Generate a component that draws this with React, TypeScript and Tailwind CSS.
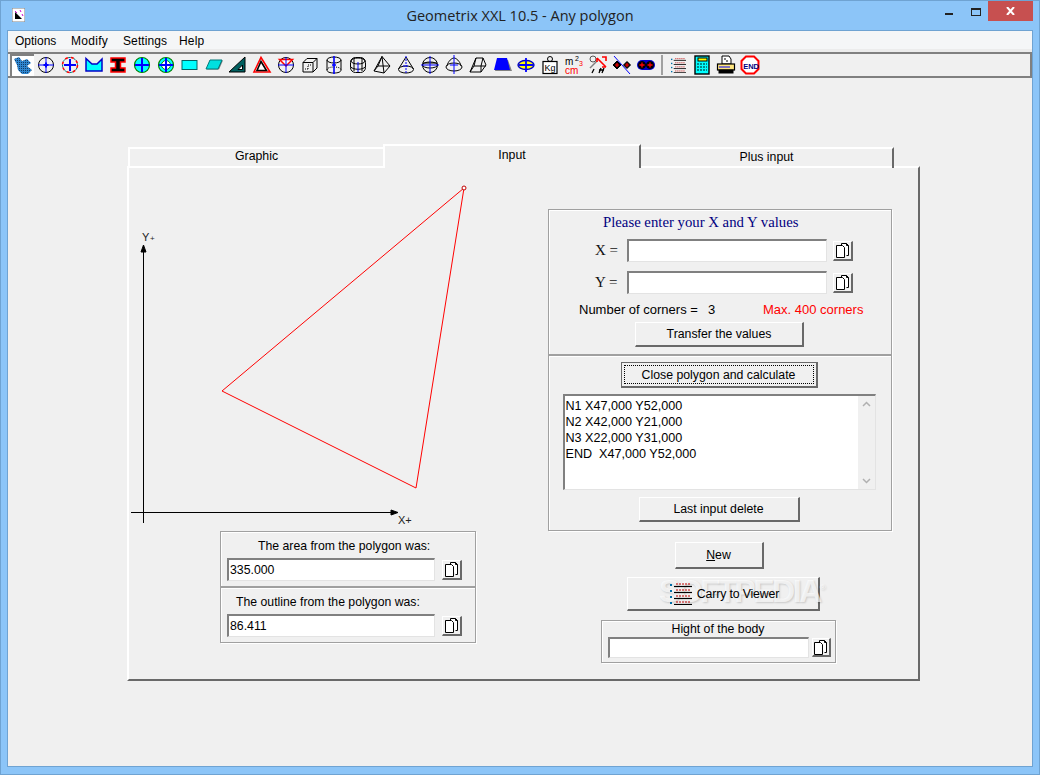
import React from 'react';

const arial = 'font-["Liberation_Sans",Arial,sans-serif]';
const serif = 'font-["Liberation_Serif","Times_New_Roman",serif]';

// win9x style bevels
const raised = 'border border-t-white border-l-white border-r-2 border-b-2 border-r-[#696969] border-b-[#696969] bg-[#f0f0f0] text-[12.3px] text-black';
const sunken = 'border border-t-2 border-l-2 border-t-[#808080] border-l-[#808080] border-r-[#e3e3e3] border-b-[#e3e3e3] bg-white';
const etched = 'border border-[#a0a0a0] shadow-[1px_1px_0_#fff,inset_1px_1px_0_#fff]';

const menus = [
  { label: 'Options', cls: 'w-[56px]' },
  { label: 'Modify', cls: 'w-[52px] tracking-[0.3px]' },
  { label: 'Settings', cls: 'w-[56px] tracking-[0.1px]' },
  { label: 'Help', cls: 'w-[30px] tracking-[0.2px]' },
];

const Cross = ({ r = 7, w = 1, c = '#0000ff' }: { r?: number; w?: number; c?: string }) => (
  <path d={`M10 ${10 - r}V${10 + r}M${10 - r} 10H${10 + r}`} stroke={c} strokeWidth={w} fill="none" />
);

const Ic = ({ children }: { children: React.ReactNode }) => (
  <svg width="20" height="20" viewBox="0 0 20 20" fill="none" stroke="#000" strokeWidth="1">
    {children}
  </svg>
);

const toolbarIcons: React.ReactNode[] = [
  <Ic>
    <defs>
      <pattern id="dith" width="2" height="2" patternUnits="userSpaceOnUse" stroke="none">
        <rect width="2" height="2" fill="#2f86d0" />
        <rect width="1" height="1" fill="#123c66" />
      </pattern>
    </defs>
    <path d="M1 3L6 1L9 5L14 3L18 7L14 10L19 14L15 18L9 18L5 14L4 9Z" fill="url(#dith)" stroke="none" />
  </Ic>,
  <Ic>
    <circle cx="10" cy="10" r="7.5" />
    <Cross r={8} />
    <path d="M10 7.5V12.5M7.5 10H12.5" stroke="#0000ff" strokeWidth="2" />
  </Ic>,
  <Ic>
    <circle cx="10" cy="10" r="7.5" stroke="#ff0000" strokeWidth="1.5" strokeDasharray="3 3" />
    <circle cx="10" cy="10" r="7.5" stroke="#007878" strokeWidth="1" strokeDasharray="3 3" strokeDashoffset="3" />
    <Cross r={6} w={2} />
  </Ic>,
  <Ic>
    <path d="M2 3.5L8 9L13 9L18 4V16H2Z" fill="#00ffff" stroke="#0000c8" strokeWidth="1.5" />
  </Ic>,
  <Ic>
    <path d="M3 3H17V7H12.5V13H17V17H3V13H7.5V7H3Z" fill="#000" stroke="#ff0000" strokeWidth="1.5" />
  </Ic>,
  <Ic>
    <circle cx="10" cy="10" r="7.5" fill="#00ffff" stroke="#008000" strokeWidth="1.2" />
    <Cross r={7} w={2} />
  </Ic>,
  <Ic>
    <circle cx="10" cy="10" r="7.5" fill="#00ffff" stroke="#008000" strokeWidth="1.2" />
    <circle cx="10" cy="10" r="4.5" fill="#fff" stroke="#008000" />
    <Cross r={7} w={2} />
  </Ic>,
  <Ic>
    <rect x="2" y="5.5" width="15" height="9" fill="#00ffff" stroke="#006464" strokeWidth="1" />
  </Ic>,
  <Ic>
    <path d="M7 5.5H19L15 14.5H3Z" fill="#808080" stroke="none" />
    <path d="M6 5H18L14 14H2Z" fill="#00e0e0" stroke="#007878" />
  </Ic>,
  <Ic>
    <path d="M1 17L17 2V17Z" fill="#005f5f" stroke="#000" />
    <path d="M10 14.5L14.5 10V14.5Z" fill="#fff" stroke="#000" />
  </Ic>,
  <Ic>
    <path d="M9 2.5L18 17H2Z" fill="#fff" stroke="#ff0000" strokeWidth="1.6" />
    <path d="M9 6.5L14.5 15.5H5Z" fill="#fff" stroke="#000" strokeWidth="1.6" />
  </Ic>,
  <Ic>
    <circle cx="10" cy="10" r="7.5" />
    <path d="M3.5 4.5H16.5L10 11Z" fill="#fff" stroke="#ff0000" strokeWidth="1.5" />
    <Cross r={8} />
  </Ic>,
  <Ic>
    <path d="M3 7.5L7 3.5H17V13L13 17H3ZM3 7.5H13V17M13 7.5L17 3.5" />
    <path d="M5 14H8M11 10H8V14" strokeDasharray="1 1" />
  </Ic>,
  <Ic>
    <ellipse cx="10" cy="5" rx="7" ry="3" />
    <path d="M3 5V15C3 17 6 18 10 18S17 17 17 15V5" />
    <path d="M3 15C3 13 6 12 10 12S17 13 17 15" strokeDasharray="1 1" />
    <path d="M10 1V19M8 10H12" stroke="#0000ff" strokeWidth="1.6" />
  </Ic>,
  <Ic>
    <rect x="2.5" y="2.5" width="15" height="15" rx="5" />
    <ellipse cx="10" cy="6" rx="7" ry="3" />
    <path d="M6 4V16M14 4V16M3 12C5 15 15 15 17 12" />
    <path d="M10 7V17" stroke="#0000ff" />
  </Ic>,
  <Ic>
    <path d="M10 1.5L2 16L12 18L18 11ZM10 1.5L12 18M10 1.5L6 11L18 11M6 11L2 16" />
  </Ic>,
  <Ic>
    <path d="M10 2L2.5 14M10 2L17.5 14" />
    <ellipse cx="10" cy="14.5" rx="7.5" ry="3.5" />
    <path d="M10 1V19M7 11H13" stroke="#0000ff" strokeDasharray="2 1" />
  </Ic>,
  <Ic>
    <circle cx="10" cy="10" r="7.5" />
    <ellipse cx="10" cy="10" rx="7.5" ry="3" />
    <path d="M3 8H17" />
    <Cross r={9} c="#0000ff" />
  </Ic>,
  <Ic>
    <path d="M3 11C4 6 8 3 10 3S16 6 17 11" />
    <ellipse cx="10" cy="12" rx="8" ry="4" />
    <path d="M10 0V19M6 10H14" stroke="#0000ff" strokeWidth="1" />
  </Ic>,
  <Ic>
    <path d="M8 3H15L18 10L13 17H2ZM15 3L13 11M8 3L6 11H18M6 11L2 17M13 11V17" />
  </Ic>,
  <Ic>
    <path d="M6 5H16L20 16H3Z" fill="#808080" stroke="none" />
    <path d="M5 3H15L18 15H2Z" fill="#0000ff" stroke="none" />
  </Ic>,
  <Ic>
    <ellipse cx="10" cy="10" rx="8" ry="4.5" fill="#ffff00" stroke="#0000c8" strokeWidth="1.4" />
    <Cross r={7} w={1.8} />
  </Ic>,
  <Ic>
    <circle cx="10" cy="4" r="2.5" />
    <rect x="3" y="6.5" width="14" height="12" fill="#fff" strokeWidth="1.2" />
    <text x="4.5" y="16" fontSize="9" fill="#000" stroke="none" fontFamily="Liberation Sans">Kg</text>
  </Ic>,
  <Ic>
    <text x="1" y="10" fontSize="10" fill="#000" stroke="none" fontFamily="Liberation Sans">m</text>
    <text x="11" y="5.5" fontSize="7" fill="#000" stroke="none" fontFamily="Liberation Sans">2</text>
    <text x="1" y="19" fontSize="10" fill="#ff0000" stroke="none" fontFamily="Liberation Sans">cm</text>
    <text x="15" y="11" fontSize="7" fill="#ff0000" stroke="none" fontFamily="Liberation Sans">3</text>
  </Ic>,
  <Ic>
    <circle cx="5" cy="4" r="3" stroke="#555" />
    <path d="M2 13L9 6" strokeWidth="1.5" stroke="#808080" />
    <path d="M9 3L18 12M14 2H18V6M9 3V7M18 12H14" stroke="#ff0000" strokeWidth="1.6" />
    <path d="M6 14L4 18M13 13L11 18M16 13L14 18M11 15H16" strokeWidth="1.3" />
  </Ic>,
  <Ic>
    <path d="M2 1L18 19" stroke="#0000ff" />
    <path d="M5 6L9 10L5 14L1 10Z" fill="#000" />
    <path d="M15 6.5L18.5 10L15 13.5L11.5 10Z" fill="#000" />
    <path d="M3 10H7M5 8V12M13 10H17M15 8V12" stroke="#ff0000" strokeWidth="1.2" />
  </Ic>,
  <Ic>
    <rect x="1" y="5" width="18" height="10" rx="5" fill="#0000c8" stroke="none" />
    <circle cx="6" cy="10" r="3.5" fill="#000" />
    <circle cx="14" cy="10" r="3.5" fill="#000" />
    <path d="M3.5 10H8.5M6 7.5V12.5M11.5 10H16.5M14 7.5V12.5" stroke="#ff0000" strokeWidth="1.3" />
  </Ic>,
];

const ListIcon = ({ size }: { size: number }) => (
  <svg width={size} height={size} viewBox="0 0 22 22" fill="none">
    {[1, 7, 13, 19].map((y) => (
      <g key={y}>
        <rect x="0" y={y} width="2" height="2" fill="#006ea8" />
        <path d={`M4 ${y + 2.5}H22`} stroke="#000" strokeWidth="1.2" />
        <path d={`M6 ${y}H21`} stroke="#c00000" strokeDasharray="2 1" />
      </g>
    ))}
  </svg>
);

const endIcons: React.ReactNode[] = [
  <ListIcon size={15} />,
  <Ic>
    <rect x="3" y="1" width="14" height="18" fill="#00ffff" stroke="#000" strokeWidth="1.4" />
    <rect x="6" y="3" width="9" height="3" fill="#ffff00" stroke="#000" />
    <path d="M5 9H15M5 12H15M5 15H15" stroke="#006464" strokeWidth="1.4" strokeDasharray="2 1" />
  </Ic>,
  <Ic>
    <path d="M6 1H13L15 4V9H6Z" fill="#fff" stroke="#000" />
    <path d="M8 4H10M10 6H12" stroke="#000" />
    <rect x="1.5" y="9" width="17" height="6" fill="#ffe680" stroke="#000" strokeWidth="1.2" />
    <path d="M3 12H14" stroke="#0000ff" />
    <rect x="3" y="15" width="14" height="3" fill="#000" />
  </Ic>,
  <Ic>
    <path d="M6 1.5H14L18.5 6V14L14 18.5H6L1.5 14V6Z" fill="#fff" stroke="#ff0000" strokeWidth="2" />
    <text x="3.2" y="13.5" fontSize="7.5" fontWeight="700" fill="#000080" stroke="none" fontFamily="Liberation Sans">END</text>
  </Ic>,
];

const CopyButton = ({ className }: { className: string }) => (
  <button className={`${raised} flex items-center justify-center ${className}`}>
    <svg width="14" height="15" viewBox="0 0 14 15" fill="none" stroke="#000">
      <path d="M5.5 2.5V0.5H10.5L12.5 2.5V12.5H10.5" fill="#fff" />
      <path d="M0.5 2.5H6.5L8.5 4.5V14.5H0.5Z" fill="#fff" />
      <path d="M10.5 0.5V2.5H12.5" />
    </svg>
  </button>
);

const Field = ({ value, className }: { value?: string; className: string }) => (
  <input
    readOnly
    value={value ?? ''}
    className={`${sunken} ${arial} px-[1px] text-[12.3px] text-black outline-none ${className}`}
  />
);

const ResultBox = ({ title, value, titleClass }: { title: string; value: string; titleClass: string }) => (
  <div className={`${etched} w-[256px] h-[56px] pl-[6px]`}>
    <div className={`h-[26px] pt-[7px] leading-[14px] text-[12.25px] ${titleClass}`}>{title}</div>
    <div className="flex items-center gap-[7px]">
      <Field value={value} className="w-[208px] h-[23px]" />
      <CopyButton className="w-[20px] h-[20px]" />
    </div>
  </div>
);

const Chart = () => (
  <svg width="418" height="363" viewBox="129 168 418 363" fill="none" className="block">
    <path d="M464 188L416 488L222 391Z" stroke="#ff0000" />
    <circle cx="464" cy="188" r="2" fill="#fff" stroke="#c00000" />
    <path d="M143.5 248V523M131 512.5H396" stroke="#000" />
    <path d="M143.5 245L146 252H141Z" fill="#000" stroke="#000" />
    <path d="M398 512.5L391 510V515Z" fill="#000" stroke="#000" />
    <text x="142" y="241" fontSize="11" fill="#222" fontFamily="Liberation Sans">Y</text>
    <text x="150" y="241" fontSize="8" fill="#222" fontFamily="Liberation Sans">+</text>
    <text x="398" y="524" fontSize="11" fill="#222" fontFamily="Liberation Sans">X+</text>
  </svg>
);

const App = () => {
  return (
    <div className={`${arial} relative w-[1040px] h-[775px] overflow-hidden bg-[#8cc5f8] border border-[#6fa3d2] flex flex-col`}>
      {/* title bar */}
      <div className="h-[29px] flex items-center shrink-0">
        <div className="w-[96px] pl-[11px]">
          <svg width="13" height="14" viewBox="0 0 13 14" className="block mt-[-2px]">
            <rect width="13" height="14" fill="#fff" stroke="#808080" />
            <path d="M3 11L10 11L3 4Z" fill="#000" />
            <path d="M3 3L5 5M8 2L9 4M10 6L11 8" stroke="#d000d0" />
          </svg>
        </div>
        <div className='flex-1 text-center font-["Open_Sans",sans-serif] text-[14.5px] text-[#222] pt-[1px]'>Geometrix XXL 10.5 - Any polygon</div>
        <div className="w-[96px] flex items-start self-start justify-end">
          <div className="w-[8px] h-[2px] bg-[#222] mt-[12px] mr-[18px]" />
          <div className="w-[10px] h-[8px] border border-[#222] border-t-2 mt-[7px] mr-[7px]" />
          <div className="w-[45px] h-[20px] bg-[#c75050] flex items-center justify-center">
            <svg width="9" height="8" viewBox="0 0 9 8" stroke="#fff" strokeWidth="2"><path d="M1 0L8 8M8 0L1 8" /></svg>
          </div>
          <div className="w-[6px]" />
        </div>
      </div>

      {/* client area */}
      <div className="flex-1 mx-[6px] mb-[7px] border border-[#6fa3d2] bg-[#f0f0f0] flex flex-col min-h-0">
        <div className="h-[18px] bg-[#f5f6f7] flex items-center pl-[7px] pt-[2px] text-[12px] text-black shrink-0">
          {menus.map((m) => (
            <span key={m.label} className={m.cls}>{m.label}</span>
          ))}
        </div>
        <div className="h-[3px] bg-[#ececec] shrink-0" />
        <div className="h-[26px] border-y-2 border-r-2 border-[#808080] flex items-center pl-[2px] shrink-0">
          <div className="flex items-center">
            {toolbarIcons.map((ic, i) => (
              <div
                key={i}
                className={`w-[24px] h-[22px] flex items-center justify-center ${i === 0 ? 'border-l-2 border-t-2 border-l-[#808080] border-t-[#808080] bg-white' : ''}`}
              >
                {ic}
              </div>
            ))}
            <div className="w-[8px] flex justify-center">
              <div className="w-[2px] h-[20px] bg-[#a0a0a0]" />
            </div>
            {endIcons.map((ic, i) => (
              <div key={i} className="w-[24px] h-[22px] flex items-center justify-center">
                {ic}
              </div>
            ))}
          </div>
        </div>

        {/* tab control */}
        <div className="pl-[119px] pt-[66px]">
          <div className="flex items-end pl-[1px] h-[24px] text-[12.3px] text-black">
            <div className="w-[255px] h-[21px] border-t-2 border-l-2 border-white text-center leading-[14px]">Graphic</div>
            <div className="relative z-10 w-[258px] h-[24px] border-t-2 border-l-2 border-r-2 border-white border-r-[#696969] bg-[#f0f0f0] text-center leading-[18px]">Input</div>
            <div className="w-[253px] h-[21px] border-t-2 border-r-2 border-t-white border-r-[#696969] text-center leading-[14px] pt-[1px]">Plus input</div>
          </div>
          <div className="w-[793px] h-[515px] mt-[-2px] border-t-2 border-l-2 border-t-white border-l-white border-r-2 border-b-2 border-r-[#696969] border-b-[#696969] flex">
            <div className="w-[419px] flex flex-col">
              <Chart />
              <div className="pl-[91px] flex flex-col">
                <ResultBox title="The area from the polygon was:" value="335.000" titleClass="pl-[31px]" />
                <ResultBox title="The outline from the polygon was:" value="86.411" titleClass="pl-[9px]" />
              </div>
            </div>

            <div className="w-[344px] pt-[41px] flex flex-col items-center">
              <div className={`${etched} w-[344px] h-[146px] flex flex-col`}>
                <div className={`${serif} text-[14.75px] leading-[16px] text-[#000080] mt-[4px] pl-[54px]`}>Please enter your X and Y values</div>
                <div className="flex items-center mt-[9px] h-[23px]">
                  <span className={`${serif} text-[15px] text-[#111] w-[78px] pl-[46px] font-medium`}>X =</span>
                  <Field className="w-[200px] h-[23px]" />
                  <CopyButton className="w-[20px] h-[20px] ml-[6px]" />
                </div>
                <div className="flex items-center mt-[9px] h-[23px]">
                  <span className={`${serif} text-[15px] text-[#111] w-[78px] pl-[46px] font-medium`}>Y =</span>
                  <Field className="w-[200px] h-[23px]" />
                  <CopyButton className="w-[20px] h-[20px] ml-[6px]" />
                </div>
                <div className="flex text-[13px] leading-[14px] mt-[9px] pl-[30px] text-black">
                  <span className="w-[129px]">Number of corners =</span>
                  <span className="w-[55px]">3</span>
                  <span className="text-[#ff0000]">Max. 400 corners</span>
                </div>
                <button className={`${raised} w-[169px] h-[25px] ml-[86px] mt-[5px]`}>Transfer the values</button>
              </div>
              <div className={`${etched} w-[344px] h-[176px] pr-[2px] flex flex-col items-center`}>
                <button className="w-[197px] h-[26px] mt-[6px] border border-[#696969] border-b-2 border-r-2 bg-[#f0f0f0] p-[2px] text-[12.3px]">
                  <span className="block h-full leading-[18px] border border-dotted border-black">Close polygon and calculate</span>
                </button>
                <div className={`${sunken} flex w-[313px] h-[96px] mt-[6px]`}>
                  <div className="flex-1 pl-[1px] pt-[2px] text-[12.6px] leading-[16px] text-black whitespace-pre">
                    <div>N1 X47,000 Y52,000</div>
                    <div>N2 X42,000 Y21,000</div>
                    <div>N3 X22,000 Y31,000</div>
                    <div>END  X47,000 Y52,000</div>
                  </div>
                  <div className="w-[17px] bg-[#f0f0f0] flex flex-col items-center justify-between py-[5px]">
                    <svg width="9" height="6" viewBox="0 0 9 6" fill="none" stroke="#b0b0b0" strokeWidth="1.5"><path d="M1 5L4.5 1.5L8 5" /></svg>
                    <svg width="9" height="6" viewBox="0 0 9 6" fill="none" stroke="#b0b0b0" strokeWidth="1.5"><path d="M1 1L4.5 4.5L8 1" /></svg>
                  </div>
                </div>
                <button className={`${raised} w-[161px] h-[25px] mt-[7px] pt-[1px]`}>Last input delete</button>
              </div>
              <button className={`${raised} w-[89px] h-[27px] mt-[11px] ml-[-2px]`}>
                <span className="underline">N</span>ew
              </button>
              <button className={`${raised} w-[193px] h-[34px] mt-[8px] ml-[6px] pl-[4px] pt-[1px] tracking-[-0.15px] flex items-center justify-center gap-[5px]`}>
                <span className="relative z-20 block">
                  <ListIcon size={22} />
                </span>
                <span className="relative z-20">Carry to Viewer</span>
              </button>
              <div className={`${etched} w-[235px] h-[43px] mt-[9px] ml-[-4px] pl-[6px]`}>
                <div className="text-[12.3px] leading-[14px] pt-[1px] text-center pr-[6px] h-[16px]">Hight of the body</div>
                <div className="flex items-center gap-[3px]">
                  <Field className="w-[201px] h-[21px]" />
                  <CopyButton className="w-[19px] h-[19px]" />
                </div>
              </div>
            </div>
          </div>
        </div>
      </div>

      {/* watermark */}
      <div className="absolute z-10 left-[658px] top-[569px] text-[32px] font-bold tracking-[-2.5px] leading-[36px] text-white/70 [text-shadow:1px_1px_2px_rgba(0,0,0,0.16)] pointer-events-none">
        SOFTPEDIA<span className="text-[8px] align-super tracking-normal">®</span>
      </div>
    </div>
  );
};

export default App;
